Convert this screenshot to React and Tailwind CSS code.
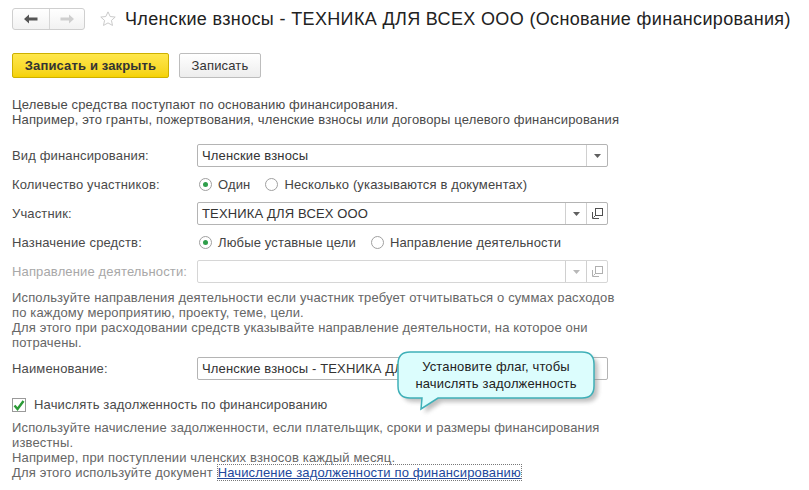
import React from 'react'

const font = { fontFamily: '"Liberation Sans", Arial, sans-serif' }

function DropButton({ disabled }) {
  return (
    <div className="flex w-[21px] items-center justify-center border-l border-[#d0d0d0]">
      <svg width="7" height="4" viewBox="0 0 7 4">
        <path d="M0 0 L7 0 L3.5 4 Z" fill={disabled ? '#b8b8b8' : '#606060'} />
      </svg>
    </div>
  )
}

function OpenButton({ disabled }) {
  const c = disabled ? '#b0b0b0' : '#505050'
  return (
    <div className="flex w-[21px] items-center justify-center border-l border-[#d0d0d0]">
      <svg width="11" height="11" viewBox="0 0 11 11">
        <rect x="3.5" y="0.5" width="7" height="7" fill="none" stroke={c} />
        <path d="M0.5 4 V10.5 H7" fill="none" stroke={c} />
        <path d="M1.5 9.5 L3.5 7.5" stroke={c} />
      </svg>
    </div>
  )
}

function Field({ value, drop, open, disabled }) {
  return (
    <div
      className={`flex h-[23px] w-[411px] rounded-[2px] border ${
        disabled ? 'border-[#d6d6d6]' : 'border-[#b4b4b4]'
      } bg-white`}
    >
      <div className="flex flex-1 items-center overflow-hidden whitespace-nowrap pl-[4px] text-[13px] text-[#333]">
        {value}
      </div>
      {drop && <DropButton disabled={disabled} />}
      {open && <OpenButton disabled={disabled} />}
    </div>
  )
}

function Radio({ checked, label }) {
  return (
    <div className="mr-[15px] flex items-center">
      <div className="flex h-[13px] w-[13px] items-center justify-center rounded-full border border-[#a0a0a0] bg-white">
        {checked && <div className="h-[5px] w-[5px] rounded-full bg-[#2e9e4a]" />}
      </div>
      <span className="ml-[6px] text-[13px] text-[#444]">{label}</span>
    </div>
  )
}

function Row({ label, muted, children }) {
  return (
    <div className="flex h-[23px] items-center">
      <div className={`w-[185px] shrink-0 text-[13px] ${muted ? 'text-[#a8a8a8]' : 'text-[#4a4a4a]'}`}>
        {label}
      </div>
      {children}
    </div>
  )
}

function Tooltip() {
  return (
    <div className="absolute left-[392px] top-[347px] h-[72px] w-[220px]">
      <svg width="220" height="72" viewBox="0 0 220 72" className="absolute left-0 top-0">
        <defs>
          <filter id="sh" x="-10%" y="-10%" width="130%" height="140%">
            <feGaussianBlur stdDeviation="2.2" />
          </filter>
        </defs>
        <path
          d="M22 9 H194 Q206 9 206 21 V43 Q206 55 194 55 H50 L33 66 L34 55 H22 Q10 55 10 43 V21 Q10 9 22 9 Z"
          fill="#8a8a8a"
          opacity="0.55"
          filter="url(#sh)"
        />
        <path
          d="M18 5 H190 Q202 5 202 17 V39 Q202 51 190 51 H46 L29 62 L30 51 H18 Q6 51 6 39 V17 Q6 5 18 5 Z"
          fill="#dcfdfd"
          stroke="#3fb0b8"
          strokeWidth="1.5"
        />
      </svg>
      <div className="absolute left-[6px] top-[5px] flex h-[46px] w-[196px] flex-col items-center justify-center whitespace-nowrap text-[13px] leading-[17px] text-[#222]">
        <span>Установите флаг, чтобы</span>
        <span>начислять задолженность</span>
      </div>
    </div>
  )
}

export default function App() {
  return (
    <div
      className="relative h-[490px] w-[809px] overflow-hidden bg-white pl-[12px] tracking-[0.15px]"
      style={font}
    >
      {/* header */}
      <div className="flex h-[38px] items-start pt-[8px]">
        <div className="flex h-[22px] overflow-hidden rounded-[3px] border border-[#cfcfcf] bg-gradient-to-b from-white to-[#f2f2f2]">
          <div className="flex w-[37px] items-center justify-center border-r border-[#d6d6d6]">
            <svg width="14" height="10" viewBox="0 0 14 10">
              <path d="M0 5 L5 0.5 V3.5 H13.5 V6.5 H5 V9.5 Z" fill="#555" />
            </svg>
          </div>
          <div className="flex w-[34px] items-center justify-center">
            <svg width="14" height="10" viewBox="0 0 14 10">
              <path d="M14 5 L9 0.5 V3.5 H0.5 V6.5 H9 V9.5 Z" fill="#cfcfcf" />
            </svg>
          </div>
        </div>
        <div className="ml-[14px] mt-[2px]">
          <svg width="18" height="18" viewBox="0 0 24 24">
            <path
              d="M12 2.5 L14.9 8.7 L21.6 9.4 L16.6 13.9 L18 20.6 L12 17.2 L6 20.6 L7.4 13.9 L2.4 9.4 L9.1 8.7 Z"
              fill="none"
              stroke="#c4c4c4"
              strokeWidth="1.2"
              strokeLinejoin="round"
            />
          </svg>
        </div>
        <div className="ml-[8px] whitespace-nowrap text-[18px] leading-[22px] tracking-[0.35px] text-[#222]">
          Членские взносы - ТЕХНИКА ДЛЯ ВСЕХ ООО (Основание финансирования)
        </div>
      </div>

      {/* command bar */}
      <div className="mt-[15px] flex gap-[10px]">
        <button className="h-[25px] w-[157px] rounded-[2px] border border-[#cdb000] bg-gradient-to-b from-[#ffe74a] to-[#f5d200] text-[13px] font-bold text-[#333]">
          Записать и закрыть
        </button>
        <button className="h-[25px] w-[82px] rounded-[2px] border border-[#bdbdbd] bg-gradient-to-b from-white to-[#ededed] text-[13px] text-[#333]">
          Записать
        </button>
      </div>

      {/* intro */}
      <div className="mt-[19px] whitespace-nowrap text-[13px] leading-[15px] text-[#4a4a4a]">
        <div>Целевые средства поступают по основанию финансирования.</div>
        <div>Например, это гранты, пожертвования, членские взносы или договоры целевого финансирования</div>
      </div>

      {/* form */}
      <div className="mt-[17px] flex flex-col gap-[6px]">
        <Row label="Вид финансирования:">
          <Field value="Членские взносы" drop />
        </Row>
        <Row label="Количество участников:">
          <div className="flex items-center pl-[2px]">
            <Radio checked label="Один" />
            <Radio label="Несколько (указываются в документах)" />
          </div>
        </Row>
        <Row label="Участник:">
          <Field value="ТЕХНИКА ДЛЯ ВСЕХ ООО" drop open />
        </Row>
        <Row label="Назначение средств:">
          <div className="flex items-center pl-[2px]">
            <Radio checked label="Любые уставные цели" />
            <Radio label="Направление деятельности" />
          </div>
        </Row>
        <Row label="Направление деятельности:" muted>
          <Field value="" drop open disabled />
        </Row>
      </div>

      <div className="mt-[7px] whitespace-nowrap text-[13px] leading-[15px] text-[#666]">
        <div>Используйте направления деятельности если участник требует отчитываться о суммах расходов</div>
        <div>по каждому мероприятию, проекту, теме, цели.</div>
        <div>Для этого при расходовании средств указывайте направление деятельности, на которое они</div>
        <div>потрачены.</div>
      </div>

      <div className="mt-[7px]">
        <Row label="Наименование:">
          <Field value="Членские взносы - ТЕХНИКА ДЛЯ ВСЕХ ООО" />
        </Row>
      </div>

      <div className="mt-[17px] flex h-[16px] items-center">
        <div className="flex h-[14px] w-[14px] items-center justify-center border border-[#9a9a9a] bg-white">
          <svg width="12" height="11" viewBox="0 0 12 11">
            <path d="M1.5 5.5 L4.5 9 L10.5 1" fill="none" stroke="#2a9a35" strokeWidth="2.4" />
          </svg>
        </div>
        <span className="ml-[8px] text-[13px] text-[#4a4a4a]">Начислять задолженность по финансированию</span>
      </div>

      <div className="mt-[7px] whitespace-nowrap text-[13px] leading-[15px] text-[#666]">
        <div>Используйте начисление задолженности, если плательщик, сроки и размеры финансирования</div>
        <div>известны.</div>
        <div>Например, при поступлении членских взносов каждый месяц.</div>
        <div>
          Для этого используйте документ{' '}
          <span className="border border-dotted border-[#777] text-[#22489c] underline">
            Начисление задолженности по финансированию
          </span>
        </div>
      </div>

      <Tooltip />
    </div>
  )
}
